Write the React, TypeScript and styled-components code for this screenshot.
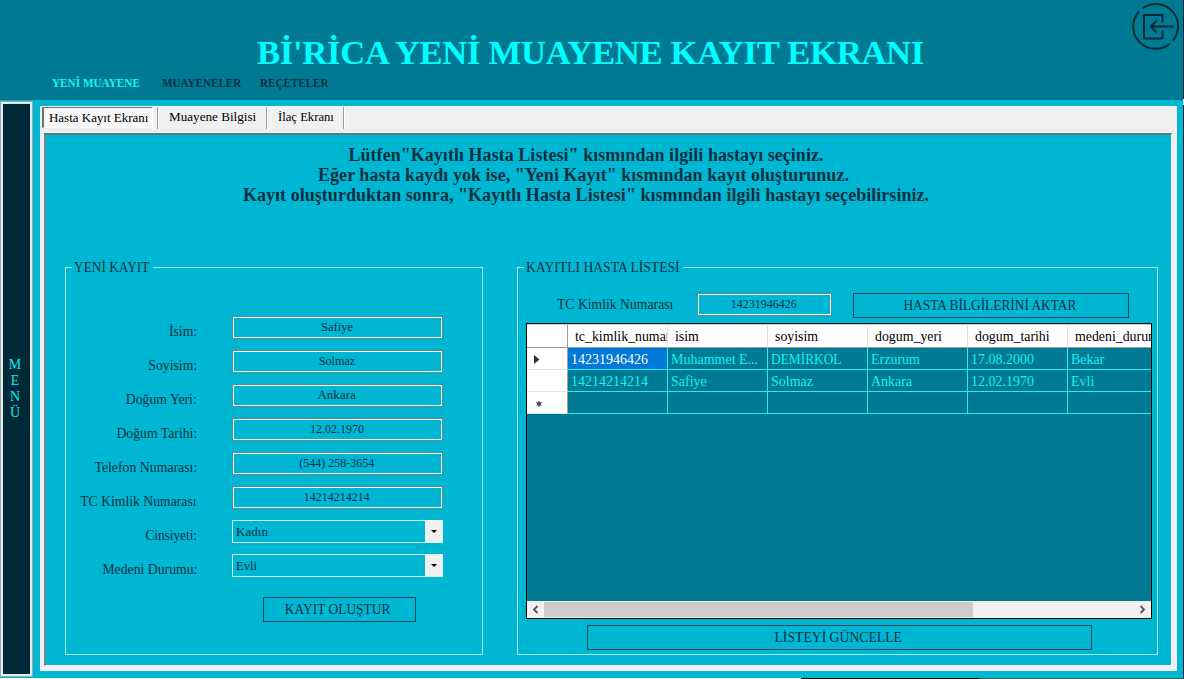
import React from "react";
import styled, { createGlobalStyle } from "styled-components";

const Global = createGlobalStyle`
  * { box-sizing: border-box; }
  body {
    margin: 0;
    background: #fff;
    font-family: "Liberation Serif", "Times New Roman", serif;
    color: #00303f;
    overflow: hidden;
  }
`;

const Window = styled.div`
  width: 1184px;
  height: 679px;
  display: grid;
  grid-template: 100px 578px 1px / 33px 1150px 1px;
  grid-template-areas: "header header edge" "menu body edge" "foot foot foot";
  background: #00b7d3;
`;

const Edge = styled.div`
  grid-area: edge;
  background: linear-gradient(#062530 99px, #d8f4f8 99px, #d8f4f8 105px, #062530 105px);
`;

const BottomLine = styled.div`
  grid-area: foot;
  background: linear-gradient(90deg, #eefcff 801px, #020c12 801px, #020c12 979px, #33606c 979px);
`;

const Condensed = styled.span<{ $scale: number; $from?: string }>`
  display: inline-block;
  white-space: nowrap;
  transform: scaleX(${(p) => p.$scale});
  transform-origin: ${(p) => p.$from ?? "left"} center;
`;

const Header = styled.header`
  grid-area: header;
  background: #007a93;
  display: grid;
  grid-template-columns: 52px 1fr 52px;
`;

const Heading = styled.div`
  display: flex;
  flex-direction: column;
  padding-top: 26px;
`;

const Title = styled.h1`
  margin: 0;
  padding-right: 2px;
  font-size: 34.67px;
  line-height: 52px;
  height: 49px;
  letter-spacing: -0.31px;
  text-align: center;
  white-space: nowrap;
  color: #00ffff;
`;

const Nav = styled.nav`
  display: flex;
`;

const NavLink = styled.a<{ $active?: boolean; $width: number }>`
  width: ${(p) => p.$width}px;
  font-size: 13.33px;
  font-weight: bold;
  line-height: 16px;
  white-space: nowrap;
  color: ${(p) => (p.$active ? "#19f4f8" : "#003040")};
`;

const ExitIcon = styled.svg`
  display: block;
  width: 52px;
  height: 54px;
  fill: none;
  stroke: #0a2a33;
  stroke-width: 2;
`;

const Menu = styled.aside`
  grid-area: menu;
  margin: 1px 0;
  border: 1px solid #9aabad;
  padding: 2px;
  background: #e4ecec;
`;

const MenuInner = styled.div`
  height: 100%;
  padding-right: 3px;
  background: #002836;
  color: #00eef2;
  font-size: 14px;
  line-height: 16px;
  display: flex;
  flex-direction: column;
  align-items: center;
  padding-top: 253px;
`;

const Body = styled.main`
  grid-area: body;
  padding: 6px 6px 7px 7px;
`;

const TabControl = styled.div`
  height: 565px;
  background: #f0f0f0;
  border-top: 1px solid #fff;
  display: flex;
  flex-direction: column;
  padding: 0 5px 5px 2px;
`;

const TabStrip = styled.div`
  height: 26px;
  display: flex;
`;

const Tab = styled.div<{ $active?: boolean; $width: number; $pad: number }>`
  width: ${(p) => p.$width}px;
  height: ${(p) => (p.$active ? 21 : 22)}px;
  padding-left: ${(p) => p.$pad}px;
  font-size: 13.33px;
  line-height: 20px;
  white-space: nowrap;
  color: #000;
  ${(p) =>
    p.$active
      ? `
    border: 1px solid #fff;
    border-top: 1px solid #6c7174;
    border-left: 2px solid #6c7174;
    padding-top: 1px;
    line-height: 18px;
    margin-right: 4px;
    background: repeating-conic-gradient(#fff 0 25%, #f0f0f0 0 50%) 0 0 / 2px 2px;`
      : `border-right: 1px solid #9a9a9a; box-shadow: 1px 0 #fff;`}
`;

const TabRule = styled.div`
  width: 1px;
  height: 22px;
  background: #9a9a9a;
`;

const Page = styled.section`
  flex: 1;
  margin-left: 2px;
  border: 1px solid #fff;
  border-top: 2px solid #4f7f89;
  border-left: 2px solid #6d8a90;
  background: #00b7d3;
  outline: 1px solid #f0f0f0;
`;

const Notice = styled.p`
  margin: 0;
  padding: 10px 0 0;
  height: 124px;
  width: 1080px;
  font-size: 18px;
  font-weight: bold;
  line-height: 20px;
  letter-spacing: 0.04px;
  text-align: center;
`;

const NoticeLine = styled.span<{ $shift?: number }>`
  display: block;
  padding-right: ${(p) => p.$shift ?? 0}px;
`;

const Groups = styled.div`
  display: flex;
  gap: 34px;
  padding-left: 19px;
`;

const Group = styled.fieldset<{ $width: number }>`
  width: ${(p) => p.$width}px;
  height: 396px;
  min-width: 0;
  margin: 0;
  padding: 0;
  border: 1px solid #a5e9ef;
`;

const Legend = styled.legend<{ $width: number; $pad: number }>`
  width: ${(p) => p.$width}px;
  margin-left: 6px;
  padding: 0 0 0 ${(p) => p.$pad}px;
  font-size: 14.67px;
  line-height: 17px;
  height: 17px;
  white-space: nowrap;
`;

const Form = styled.div`
  display: flex;
  flex-direction: column;
  gap: 11px;
  padding-top: 40px;
`;

const FormRow = styled.div`
  height: 23px;
  display: grid;
  grid-template-columns: 131px 211px;
  column-gap: 35px;
`;

const Label = styled.label<{ $align?: string; $top?: number }>`
  margin-top: ${(p) => p.$top ?? 7}px;
  font-size: 14.67px;
  line-height: 17px;
  text-align: ${(p) => p.$align ?? "right"};
  white-space: nowrap;
`;

const TextBox = styled.div`
  height: 23px;
  padding-right: 1px;
  border: 1px solid #5f8a92;
  box-shadow: inset 0 0 0 1px #f4ffff;
  font-size: 13.33px;
  line-height: 20px;
  text-align: center;
`;

const Select = styled.div`
  height: 23px;
  border: 1px solid #d9f5f7;
  padding-left: 3px;
  display: flex;
  justify-content: space-between;
  font-size: 13.33px;
  line-height: 21px;
`;

const SelectButton = styled.span`
  width: 17px;
  padding-left: 1px;
  background: #f0f0f0;
  display: flex;
  align-items: center;
  justify-content: center;
`;

const Button = styled.button<{ $width: number; $margin?: string }>`
  display: block;
  width: ${(p) => p.$width}px;
  height: 25px;
  margin: ${(p) => p.$margin ?? "0"};
  padding: 0 3px 0 0;
  border: 1px solid #0d4353;
  background: transparent;
  font: 14.67px/23px "Liberation Serif", "Times New Roman", serif;
  color: #00303f;
`;

const SearchRow = styled.div`
  display: grid;
  grid-template-columns: 140px 135px 276px;
  padding: 17px 0 5px 39px;
`;

const DataGrid = styled.div`
  width: 626px;
  height: 296px;
  margin-left: 8px;
  border: 1px solid #000;
  background: #007a93;
  display: flex;
  flex-direction: column;
`;

const GridRow = styled.div<{ $head?: boolean }>`
  display: grid;
  grid-template-columns: 41px repeat(5, 100px) 83px;
  height: ${(p) => (p.$head ? 24 : 22)}px;
`;

const HeadCell = styled.div`
  padding-left: 7px;
  border-right: 1px solid #e2e2e2;
  border-top: 1px solid #c4c8ca;
  border-bottom: 1px solid #979c9e;
  background: #fff;
  color: #000;
  font-size: 14.67px;
  line-height: 23px;
  white-space: nowrap;
  overflow: hidden;
  &:first-child { border-right-color: #a0a0a0; }
  &:last-child { border-right: 0; }
`;

const RowHead = styled.div`
  background: #fff;
  border-right: 1px solid #a0a0a0;
  border-bottom: 1px solid #e2e2e2;
  padding: 2px 0 0 7px;
  display: flex;
  align-items: center;
`;

const Cell = styled.div<{ $selected?: boolean }>`
  padding-left: 3px;
  border-right: 1px solid #22eef4;
  border-bottom: 1px solid #22eef4;
  background: ${(p) => (p.$selected ? "#0078d7" : "transparent")};
  color: ${(p) => (p.$selected ? "#fff" : "#12f0f5")};
  font-size: 14.67px;
  line-height: 23px;
  white-space: nowrap;
  overflow: hidden;
  &:last-child { border-right: 0; }
`;

const ScrollBar = styled.div`
  height: 17px;
  margin-top: auto;
  background: #f0f0f0;
  display: grid;
  grid-template-columns: 17px 429px 1fr 17px;
  align-items: center;
  justify-items: center;
`;

const Thumb = styled.div`
  width: 100%;
  height: 15px;
  background: #cdcdcd;
`;

const Chevron = ({ d }: { d: string }) => (
  <svg width="17" height="17" viewBox="0 0 17 17" fill="none" stroke="#555" strokeWidth="1.8">
    <path d={d} />
  </svg>
);

const fields = [
  { label: "İsim:", value: "Safiye", labelScale: 0.937, scale: 0.94 },
  { label: "Soyisim:", value: "Solmaz", labelScale: 0.937, scale: 0.915 },
  { label: "Doğum Yeri:", value: "Ankara", labelScale: 0.937, scale: 0.98 },
  { label: "Doğum Tarihi:", value: "12.02.1970", labelScale: 0.937, scale: 0.9 },
  { label: "Telefon Numarası:", value: "(544) 258-3654", labelScale: 0.941, scale: 0.9 },
  { label: "TC Kimlik Numarası", value: "14214214214", labelScale: 0.934, scale: 0.9 },
];

const selects = [
  { label: "Cinsiyeti:", value: "Kadın", labelScale: 0.905, scale: 0.98 },
  { label: "Medeni Durumu:", value: "Evli", labelScale: 0.937, scale: 0.94 },
];

const columns = ["tc_kimlik_numarasi", "isim", "soyisim", "dogum_yeri", "dogum_tarihi", "medeni_durumu"];

const rows = [
  ["14231946426", "Muhammet E...", "DEMİRKOL", "Erzurum", "17.08.2000", "Bekar"],
  ["14214214214", "Safiye", "Solmaz", "Ankara", "12.02.1970", "Evli"],
  ["", "", "", "", "", ""],
];

export default function App() {
  return (
    <Window>
      <Global />
      <Header>
        <span />
        <Heading>
          <Title>Bİ'RİCA YENİ MUAYENE KAYIT EKRANI</Title>
          <Nav>
            <NavLink $active $width={110}><Condensed $scale={0.843}>YENİ MUAYENE</Condensed></NavLink>
            <NavLink $width={98}><Condensed $scale={0.834}>MUAYENELER</Condensed></NavLink>
            <NavLink $width={90}><Condensed $scale={0.833}>REÇETELER</Condensed></NavLink>
          </Nav>
        </Heading>
        <ExitIcon viewBox="7 0 52 54">
          <path d="M18.5 8.4A22.3 22.3 0 0 1 49 40.5M45.7 43.7A22.3 22.3 0 0 1 15 11.5" />
          <path d="M38.5 22.5V15H20v23.5h18.5V30.5M50 26.5H26.5M33 20.3l-6.3 6.2 6.3 6.2" />
        </ExitIcon>
      </Header>
      <Edge />
      <Menu>
        <MenuInner>
          <span>M</span>
          <span>E</span>
          <span>N</span>
          <span>Ü</span>
        </MenuInner>
      </Menu>
      <Body>
        <TabControl>
          <TabStrip>
            <Tab $active $width={111} $pad={5}><Condensed $scale={0.973}>Hasta Kayıt Ekranı</Condensed></Tab>
            <TabRule />
            <Tab $width={109} $pad={11}><Condensed $scale={0.985}>Muayene Bilgisi</Condensed></Tab>
            <Tab $width={77} $pad={11}><Condensed $scale={0.95}>İlaç Ekranı</Condensed></Tab>
          </TabStrip>
          <Page>
            <Notice>
              <NoticeLine>Lütfen"Kayıtlı Hasta Listesi" kısmından ilgili hastayı seçiniz.</NoticeLine>
              <NoticeLine $shift={5}>Eğer hasta kaydı yok ise, "Yeni Kayıt" kısmından kayıt oluşturunuz.</NoticeLine>
              <NoticeLine>Kayıt oluşturduktan sonra, "Kayıtlı Hasta Listesi" kısmından ilgili hastayı seçebilirsiniz.</NoticeLine>
            </Notice>
            <Groups>
              <Group $width={418}>
                <Legend $width={81} $pad={2}><Condensed $scale={0.91}>YENİ KAYIT</Condensed></Legend>
                <Form>
                  {fields.map((f) => (
                    <FormRow key={f.label}>
                      <Label><Condensed $scale={f.labelScale} $from="right">{f.label}</Condensed></Label>
                      <TextBox><Condensed $scale={f.scale} $from="center">{f.value}</Condensed></TextBox>
                    </FormRow>
                  ))}
                  {selects.map((s) => (
                    <FormRow key={s.label}>
                      <Label><Condensed $scale={s.labelScale} $from="right">{s.label}</Condensed></Label>
                      <Select>
                        <Condensed $scale={s.scale}>{s.value}</Condensed>
                        <SelectButton>
                          <svg width="6" height="3" viewBox="0 0 6 3"><path d="M0 0h6L3 3z" /></svg>
                        </SelectButton>
                      </Select>
                    </FormRow>
                  ))}
                </Form>
                <Button $width={153} $margin="20px 0 0 197px">
                  <Condensed $scale={0.917} $from="center">KAYIT OLUŞTUR</Condensed>
                </Button>
              </Group>
              <Group $width={641}>
                <Legend $width={159} $pad={2}><Condensed $scale={0.93}>KAYITLI HASTA LİSTESİ</Condensed></Legend>
                <SearchRow>
                  <Label $align="left" $top={3}><Condensed $scale={0.934}>TC Kimlik Numarası</Condensed></Label>
                  <TextBox><Condensed $scale={0.9} $from="center">14231946426</Condensed></TextBox>
                  <Button $width={276} $margin="0 0 0 21px">
                    <Condensed $scale={0.911} $from="center">HASTA BİLGİLERİNİ AKTAR</Condensed>
                  </Button>
                </SearchRow>
                <DataGrid>
                  <GridRow $head>
                    <HeadCell />
                    {columns.map((c) => (
                      <HeadCell key={c}><Condensed $scale={0.945}>{c}</Condensed></HeadCell>
                    ))}
                  </GridRow>
                  {rows.map((row, r) => (
                    <GridRow key={r}>
                      <RowHead>
                        {r === 0 && <svg width="6" height="9" viewBox="0 0 6 9" fill="#333"><path d="M0 0l5.5 4.5L0 9z" /></svg>}
                        {r === 2 && (
                          <svg width="9" height="7" viewBox="0 0 9 7" stroke="#555" strokeWidth="1.1">
                            <circle cx="5" cy="3.8" r="2.1" fill="#444" stroke="none" />
                            <path d="M5 0.8v6M2.4 2.2l5.2 3.2M2.4 5.4l5.2-3.2" />
                          </svg>
                        )}
                      </RowHead>
                      {row.map((v, i) => (
                        <Cell key={i} $selected={r === 0 && i === 0}>
                          <Condensed $scale={v === "DEMİRKOL" ? 0.912 : 0.955}>{v}</Condensed>
                        </Cell>
                      ))}
                    </GridRow>
                  ))}
                  <ScrollBar>
                    <Chevron d="M10.5 5L7 8.5l3.5 3.5" />
                    <Thumb />
                    <span />
                    <Chevron d="M6.5 5L10 8.5 6.5 12" />
                  </ScrollBar>
                </DataGrid>
                <Button $width={505} $margin="6px 0 0 69px">
                  <Condensed $scale={0.934} $from="center">LİSTEYİ GÜNCELLE</Condensed>
                </Button>
              </Group>
            </Groups>
          </Page>
        </TabControl>
      </Body>
      <BottomLine />
    </Window>
  );
}
